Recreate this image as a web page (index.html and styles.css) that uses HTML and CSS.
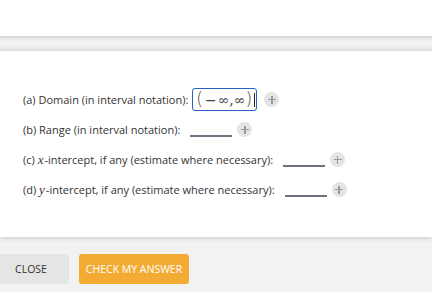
FILE: index.html
```html
<!DOCTYPE html>
<html lang="en">
<head>
  <meta charset="UTF-8" />
  <title>Domain and Range</title>
  <link rel="stylesheet" href="styles.css">
</head>
<body>
  <div class="top-space"></div>
  <div class="divider-band"></div>

  <div class="question-panel">
    <div class="answer-row">
      <span class="prompt">(a) Domain (in interval notation):</span>
      <span class="math-box"><span class="paren">(</span><span class="minus">&minus;</span>&infin;,&infin;<span class="paren">)</span><span class="caret"></span></span>
      <span class="plus-btn"></span>
    </div>
    <div class="answer-row">
      <span class="prompt">(b) Range (in interval notation):</span>
      <span class="blank"></span>
      <span class="plus-btn"></span>
    </div>
    <div class="answer-row">
      <span class="prompt">(c) <i class="var">x</i>-intercept, if any (estimate where necessary):</span>
      <span class="blank"></span>
      <span class="plus-btn"></span>
    </div>
    <div class="answer-row">
      <span class="prompt">(d) <i class="var">y</i>-intercept, if any (estimate where necessary):</span>
      <span class="blank"></span>
      <span class="plus-btn"></span>
    </div>
  </div>

  <div class="footer">
    <button class="btn btn-close">CLOSE</button>
    <button class="btn btn-check">CHECK MY ANSWER</button>
  </div>
</body>
</html>
```

FILE: styles.css
```css
body {
  margin: 0;
  font-family: "Open Sans", "Noto Sans", Arial, sans-serif;
  background: #f2f2f2;
  color: #333;
  height: 292px;
  overflow: hidden;
}
.top-space {
  height: 36px;
  background: #fff;
}
.divider-band {
  height: 15px;
  background: linear-gradient(#cfcfcf 0, #e4e4e4 2px, #f1f1f1 5px, #f1f1f1 10px, #e2e2e2 14px, #d9d9d9 15px);
}
.question-panel {
  background: #fff;
  height: 186px;
  padding: 37px 0 0 23px;
  box-sizing: border-box;
  box-shadow: 0 2px 4px rgba(0,0,0,0.12);
  position: relative;
}
.answer-row {
  display: flex;
  align-items: center;
  height: 23px;
  margin-bottom: 7px;
  font-size: 11px;
}
.prompt {
  white-space: nowrap;
}
.var {
  font-family: "Liberation Serif", "DejaVu Serif", serif;
  font-size: 13px;
  margin-right: 1px;
}
.math-box {
  display: flex;
  align-items: center;
  margin-left: 4px;
  width: 65px;
  height: 23px;
  box-sizing: border-box;
  padding: 0 0 0 3px;
  border: 1px solid #2a5fc6;
  border-radius: 3px;
  font-family: "DejaVu Serif", serif;
  font-size: 14px;
  color: #444;
}
.paren {
  font-family: "DejaVu Sans", sans-serif;
  font-size: 17px;
  font-weight: 300;
  line-height: 1;
}
.minus {
  margin: 0 1px 0 2px;
}
.caret {
  display: inline-block;
  width: 1px;
  height: 14px;
  background: #222;
  margin-left: 2px;
}
.blank {
  width: 42px;
  height: 10px;
  border-bottom: 2px solid #707080;
  margin-left: 10px;
  align-self: flex-end;
  margin-bottom: 4px;
}
.blank + .plus-btn {
  margin-left: 5px;
}
.plus-btn {
  position: relative;
  width: 15px;
  height: 15px;
  border-radius: 50%;
  background: #e4e4e4;
  margin-left: 7px;
}
.plus-btn::before, .plus-btn::after {
  content: "";
  position: absolute;
  background: #9a9a9a;
  left: 3.5px;
  top: 6.75px;
  width: 8px;
  height: 1.5px;
}
.plus-btn::after {
  left: 6.75px;
  top: 3.5px;
  width: 1.5px;
  height: 8px;
}
.footer {
  display: flex;
  gap: 10px;
  padding-top: 17px;
}
.btn {
  height: 30px;
  border: none;
  border-radius: 3px;
  font-family: "Open Sans", "Noto Sans", Arial, sans-serif;
  font-size: 10.5px;
  padding: 0;
}
.btn-close {
  width: 69px;
  padding-right: 7px;
  background: #e5e5e5;
  color: #333;
  border-top-left-radius: 0;
  border-bottom-left-radius: 0;
}
.btn-check {
  width: 110px;
  background: #f4ab33;
  color: #fff;
}
```
